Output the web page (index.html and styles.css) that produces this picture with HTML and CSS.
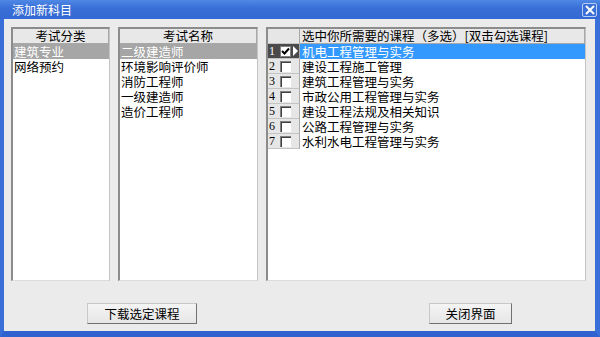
FILE: index.html
```html
<!DOCTYPE html>
<html lang="zh-CN">
<head>
    <meta charset="UTF-8">
    <title>添加新科目</title>
    <link rel="stylesheet" href="styles.css">
</head>
<body>
    <div class="window">
        <div class="titlebar">
            <span class="title">添加新科目</span>
            <span class="close">
                <svg width="10" height="10" viewBox="0 0 10 10"><path d="M1 1L9 9M9 1L1 9" stroke="#fff" stroke-width="2"/></svg>
            </span>
        </div>

        <div class="body">
            <div class="panels">
                <div class="panel list-kind">
                    <div class="head">考试分类</div>
                    <div class="item sel">建筑专业</div>
                    <div class="item">网络预约</div>
                </div>

                <div class="panel list-name">
                    <div class="head">考试名称</div>
                    <div class="item sel">二级建造师</div>
                    <div class="item">环境影响评价师</div>
                    <div class="item">消防工程师</div>
                    <div class="item">一级建造师</div>
                    <div class="item">造价工程师</div>
                </div>

                <div class="panel grid">
                    <div class="row">
                        <div class="gut"></div>
                        <div class="head cell-head">选中你所需要的课程（多选）[双击勾选课程]</div>
                    </div>
                    <div class="row cur">
                        <div class="gut"><span class="num">1</span><span class="chk on"><svg width="9" height="9" viewBox="0 0 9 9"><path d="M1 4L3.5 6.5L8 1.5" fill="none" stroke="#000" stroke-width="2"/></svg></span><span class="ind"></span></div>
                        <div class="cell">机电工程管理与实务</div>
                    </div>
                    <div class="row">
                        <div class="gut"><span class="num">2</span><span class="chk"></span></div>
                        <div class="cell">建设工程施工管理</div>
                    </div>
                    <div class="row">
                        <div class="gut"><span class="num">3</span><span class="chk"></span></div>
                        <div class="cell">建筑工程管理与实务</div>
                    </div>
                    <div class="row">
                        <div class="gut"><span class="num">4</span><span class="chk"></span></div>
                        <div class="cell">市政公用工程管理与实务</div>
                    </div>
                    <div class="row">
                        <div class="gut"><span class="num">5</span><span class="chk"></span></div>
                        <div class="cell">建设工程法规及相关知识</div>
                    </div>
                    <div class="row">
                        <div class="gut"><span class="num">6</span><span class="chk"></span></div>
                        <div class="cell">公路工程管理与实务</div>
                    </div>
                    <div class="row">
                        <div class="gut"><span class="num">7</span><span class="chk"></span></div>
                        <div class="cell">水利水电工程管理与实务</div>
                    </div>
                </div>
            </div>

            <div class="buttons">
                <button class="btn btn-down">下载选定课程</button>
                <button class="btn btn-close">关闭界面</button>
            </div>
        </div>
    </div>
</body>
</html>
```

FILE: styles.css
```css
* {
    box-sizing: border-box;
}
body {
    margin: 0;
    font-family: "Noto Sans CJK SC", "Liberation Sans", sans-serif;
    font-size: 12.5px;
    color: #000;
}
.window {
    width: 600px;
    height: 337px;
    display: flex;
    flex-direction: column;
}
.titlebar {
    height: 19px;
    background: linear-gradient(#4f88e6, #3a70d8 40%, #3468d2);
    display: flex;
    align-items: center;
    padding: 0 3px 0 12px;
    color: #fff;
}
.title {
    flex: 1;
    font-size: 12px;
    line-height: 19px;
}
.close {
    width: 15px;
    height: 14px;
    border: 1px solid #b8cdf3;
    border-radius: 2px;
    background: #3b6fd8;
    display: flex;
    align-items: center;
    justify-content: center;
}

.body {
    flex: 1;
    background: #ebebeb;
    border-left: 4px solid #3a6ed8;
    border-right: 5px solid #3a6ed8;
    border-bottom: 6px solid #2f62cf;
    padding: 8px 9px 0 7px;
}
.panels {
    display: flex;
    gap: 8px;
    height: 254px;
}
.panel {
    background: #fff;
    border-style: solid;
    border-width: 2px 1px 1px 2px;
    border-color: #8c8c8c #c4c4c4 #dcdcdc #8c8c8c;
    line-height: 15px;
    overflow: hidden;
}
.list-kind {
    width: 99px;
}
.list-name {
    width: 140px;
}
.grid {
    flex: 1;
}
.head {
    height: 15px;
    background: #e8e8e8;
    border-bottom: 1px solid #a8a8a8;
    border-right: 1px solid #a8a8a8;
    text-align: center;
    line-height: 14px;
    white-space: nowrap;
}
.item {
    height: 15px;
    padding-left: 1px;
    white-space: nowrap;
}
.item.sel {
    background: #a6a6a6;
    color: #fff;
}

.row {
    display: flex;
    height: 15px;
}
.gut {
    width: 32px;
    flex: none;
    background: #e6e6e6;
    border-bottom: 1px solid #c4c4c4;
    border-right: 1px solid #a8a8a8;
    display: flex;
    align-items: center;
}
.cell-head {
    flex: 1;
    text-align: left;
    padding-left: 2px;
}
.cell {
    flex: 1;
    padding-left: 2px;
    white-space: nowrap;
}
.num {
    width: 12px;
    padding-left: 1px;
    font-family: "Liberation Serif", serif;
    font-size: 12px;
}
.chk {
    width: 11px;
    height: 11px;
    background: #fff;
    border-top: 1px solid #808080;
    border-left: 1px solid #808080;
    box-shadow: inset 1px 1px 0 #404040;
    display: flex;
    align-items: center;
    justify-content: center;
}
.chk.on {
    box-shadow: none;
    border: 1px solid #808080;
}
.row.cur .gut {
    background: #4a4a4a;
}
.row.cur .num {
    color: #fff;
}
.ind {
    width: 0;
    height: 0;
    margin-left: 2px;
    border-top: 5px solid transparent;
    border-bottom: 5px solid transparent;
    border-left: 5px solid #fff;
}
.row.cur .cell {
    background: #3399ff;
    color: #fff;
}

.buttons {
    display: flex;
    margin-top: 22px;
}
.btn {
    height: 21px;
    font-family: inherit;
    font-size: 12.5px;
    background: linear-gradient(#f4f4f4, #e6e6e6);
    border: 1px solid #8a8a8a;
    border-color: #c8c8c8 #707070 #707070 #c8c8c8;
    padding: 0;
    line-height: 18px;
    color: #000;
}
.btn-down {
    width: 110px;
    margin-left: 76px;
}
.btn-close {
    width: 83px;
    margin-left: 232px;
}
```
